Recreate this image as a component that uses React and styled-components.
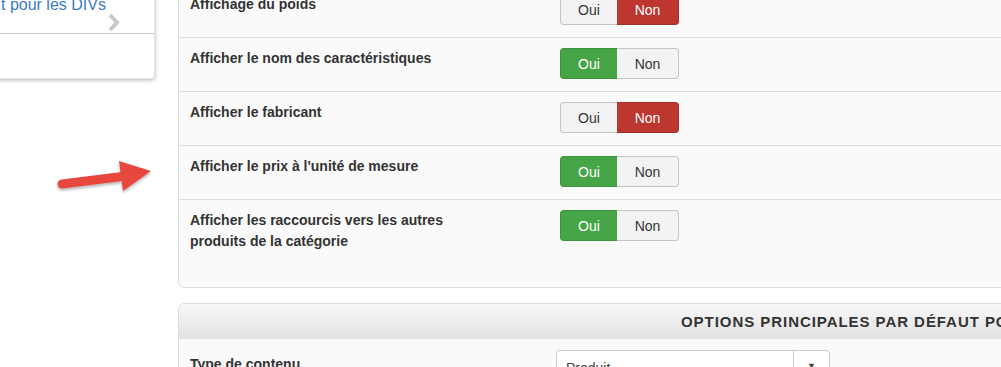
import React from 'react';
import styled, { createGlobalStyle } from 'styled-components';

const GlobalStyle = createGlobalStyle`
  html, body {
    margin: 0;
    padding: 0;
    background: #fff;
    overflow: hidden;
  }
  body {
    font-family: 'Liberation Sans', Arial, sans-serif;
    font-size: 14px;
    color: #333;
  }
`;

const options = [
  { label: 'Affichage du poids', value: false },
  { label: 'Afficher le nom des caractéristiques', value: true },
  { label: 'Afficher le fabricant', value: false },
  { label: "Afficher le prix à l'unité de mesure", value: true },
  { label: 'Afficher les raccourcis vers les autres produits de la catégorie', value: true, wide: true },
];

const Toggle = ({ value }) => (
  <BtnGroup>
    <Btn $active={value} $tone="success" $w={57}>Oui</Btn>
    <Btn $active={!value} $tone="danger" $w={62}>Non</Btn>
  </BtnGroup>
);

const Chevron = () => (
  <ChevronIcon width="14" height="19" viewBox="0 0 14 19">
    <polyline points="3,2 10,9.5 3,17" fill="none" stroke="#c8c8c8" strokeWidth="4" />
  </ChevronIcon>
);

const Arrow = () => (
  <ArrowSvg width="120" height="50" viewBox="0 0 120 50">
    <defs>
      <filter id="sh" x="-20%" y="-40%" width="140%" height="180%">
        <feDropShadow dx="0" dy="2" stdDeviation="1.5" floodColor="#000" floodOpacity="0.3" />
      </filter>
    </defs>
    <g filter="url(#sh)" fill="#e8473e">
      <line x1="16" y1="29" x2="80" y2="21" stroke="#e8473e" strokeWidth="9" strokeLinecap="round" />
      <polygon points="73,6 105,16 77,36" />
    </g>
  </ArrowSvg>
);

const App = () => {
  return (
    <Page>
      <GlobalStyle />
      <Side>
        <Card>
          <LinkItem>
            <LinkText>t pour les DIVs</LinkText>
            <Chevron />
          </LinkItem>
          <CardBody />
        </Card>
      </Side>

      <Main>
        <Panel $last>
          {options.map((o) => (
            <Row key={o.label}>
              <Label $narrow={o.wide}>{o.label}</Label>
              <Toggle value={o.value} />
            </Row>
          ))}
        </Panel>

        <Panel>
          <PanelHeader>Options principales par défaut pour les produits</PanelHeader>
          <SelectRow>
            <Label $select>Type de contenu</Label>
            <Select>
              <SelectText>Produit</SelectText>
              <SelectCaret>▼</SelectCaret>
            </Select>
          </SelectRow>
        </Panel>
      </Main>

      <Arrow />
    </Page>
  );
};

export default App;

const Page = styled.div`
  position: relative;
  display: flex;
  align-items: flex-start;
  gap: 23px;
  width: 1400px;
`;

const Side = styled.div`
  width: 155px;
  flex: none;
`;

const Card = styled.div`
  margin: -40px 0 0 -15px;
  padding-left: 15px;
  background: #fff;
  border: 1px solid #e2e2e2;
  border-radius: 4px;
  box-shadow: 0 1px 4px rgba(0, 0, 0, 0.28);
`;

const LinkItem = styled.div`
  position: relative;
  height: 72px;
  display: flex;
  align-items: flex-end;
  border-bottom: 1px solid #cfcfcf;
  margin-left: -15px;
  padding-left: 15px;
`;

const LinkText = styled.span`
  font-size: 16px;
  line-height: 20px;
  color: #3a7bbf;
  margin-bottom: 18px;
  white-space: nowrap;
`;

const ChevronIcon = styled.svg`
  position: absolute;
  right: 33px;
  bottom: 1px;
`;

const CardBody = styled.div`
  height: 44px;
`;

const Main = styled.div`
  width: 1200px;
  margin-top: -17px;
`;

const Panel = styled.div`
  background: #fafafa;
  border: 1px solid #dcdcdc;
  border-radius: 6px;
  padding-bottom: ${(p) => (p.$last ? '23px' : '0')};
  margin-bottom: 15px;
  overflow: hidden;
`;

const Row = styled.div`
  display: flex;
  align-items: flex-start;
  padding: 10px 0 12px 11px;
  border-bottom: 1px solid #dddddd;

  &:last-child {
    border-bottom: none;
  }
`;

const Label = styled.div`
  width: ${(p) => (p.$select ? '366px' : '370px')};
  flex: none;
  font-weight: bold;
  font-size: 14px;
  line-height: 21px;
  color: #333;
  box-sizing: border-box;
  padding-right: ${(p) => (p.$narrow ? '75px' : '0')};
  padding-top: ${(p) => (p.$select ? '4px' : '0')};
`;

const BtnGroup = styled.div`
  display: flex;
  height: 31px;
`;

const Btn = styled.div`
  width: ${(p) => p.$w}px;
  box-sizing: border-box;
  display: flex;
  align-items: center;
  justify-content: center;
  font-size: 14px;
  color: ${(p) => (p.$active ? '#fff' : '#333')};
  background: ${(p) =>
    p.$active ? (p.$tone === 'success' ? '#46a546' : '#bd362f') : '#f3f3f3'};
  border: 1px solid
    ${(p) => (p.$active ? (p.$tone === 'success' ? '#3e923e' : '#a6302a') : '#c4c4c4')};

  &:first-child {
    border-radius: 4px 0 0 4px;
    border-right: none;
  }
  &:last-child {
    border-radius: 0 4px 4px 0;
    border-left: none;
  }
`;

const PanelHeader = styled.div`
  height: 35px;
  box-sizing: border-box;
  padding: 9px 0 0 502px;
  font-size: 15px;
  font-weight: bold;
  letter-spacing: 0.95px;
  text-transform: uppercase;
  color: #333;
  background: linear-gradient(to bottom, #f8f8f8, #e2e2e2);
  white-space: nowrap;
`;

const SelectRow = styled.div`
  display: flex;
  align-items: flex-start;
  padding: 11px 0 12px 11px;
`;

const Select = styled.div`
  width: 274px;
  height: 34px;
  box-sizing: border-box;
  display: flex;
  background: #fff;
  border: 1px solid #cccccc;
  border-radius: 4px;
`;

const SelectText = styled.div`
  flex: 1;
  padding: 9px 0 0 9px;
  font-size: 14px;
  color: #444;
`;

const SelectCaret = styled.div`
  width: 35px;
  border-left: 1px solid #cccccc;
  display: flex;
  justify-content: center;
  padding-top: 10px;
  font-size: 9px;
  color: #444;
`;

const ArrowSvg = styled.svg`
  position: absolute;
  left: 46px;
  top: 155px;
`;
